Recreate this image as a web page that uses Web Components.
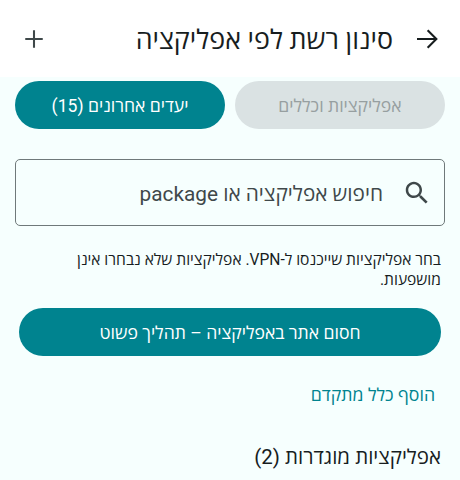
<!DOCTYPE html>
<html lang="he" dir="rtl">
<head>
<meta charset="utf-8">
<style>
  html, body { margin: 0; height: 100%; }
  body { width: 460px; height: 480px; overflow: hidden; background: #f6fffe; font-family: Roboto, "Open Sans", "Liberation Sans", sans-serif; color: #171d1e; }
</style>
</head>
<body>
<app-bar title="סינון רשת לפי אפליקציה"></app-bar>
<filter-page></filter-page>
<script>
class AppBar extends HTMLElement {
    constructor() {
        super();
        this.attachShadow({ mode: "open" });
        this.shadowRoot.innerHTML = `
            <style>
                :host { display: flex; align-items: center; height: 77px; background: #fff; padding: 0 18.5px 0 18.5px; box-sizing: border-box; }
                svg { width: 30px; height: 30px; flex: none; fill: none; stroke-width: 1.65; }
                h1 { flex: 1; margin: 0 18.5px 0 0; font-size: 26.8px; font-weight: 400; color: #171d1e; }
                .add { stroke: #3f484a; }
                .back { stroke: #171d1e; }
            </style>
            <svg class="back" viewBox="0 0 24 24"><path d="M4 12h15.5M12.5 5l7 7-7 7"/></svg>
            <h1>${this.getAttribute("title")}</h1>
            <svg class="add" viewBox="0 0 24 24"><path d="M5 12h14M12 5v14"/></svg>
        `;
    }
}

class PillButton extends HTMLElement {
    constructor() {
        super();
        this.attachShadow({ mode: "open" });
        this.shadowRoot.innerHTML = `
            <style>
                :host { display: flex; align-items: center; justify-content: center; height: 48px; border-radius: 24px; background: #00838f; color: #fff; font-size: 17.6px; }
                :host([disabled]) { background: #dae2e3; color: #979fa0; }
            </style>
            <slot></slot>
        `;
    }
}

class SearchBox extends HTMLElement {
    constructor() {
        super();
        this.attachShadow({ mode: "open" });
        this.shadowRoot.innerHTML = `
            <style>
                :host { display: flex; align-items: center; gap: 19px; height: 67px; box-sizing: border-box; padding: 0 12px 0 0; border: 1px solid #6f797a; border-radius: 5px; color: #3f484a; font-size: 20.8px; }
                svg { width: 30px; height: 30px; fill: #3f484a; flex: none; }
            </style>
            <svg viewBox="0 0 24 24"><path d="M15.5 14h-.79l-.28-.27C15.41 12.59 16 11.11 16 9.5 16 5.91 13.09 3 9.5 3S3 5.91 3 9.5 5.91 16 9.5 16c1.61 0 3.09-.59 4.23-1.57l.27.28v.79l5 4.99L20.49 19l-4.99-5zm-6 0C7.01 14 5 11.99 5 9.5S7.01 5 9.5 5 14 7.01 14 9.5 11.99 14 9.5 14z"/></svg>
            <slot></slot>
        `;
    }
}

class FilterPage extends HTMLElement {
    constructor() {
        super();
        this.attachShadow({ mode: "open" });
        this.shadowRoot.innerHTML = `
            <style>
                :host { display: block; padding: 4px 15px 0; }
                .tabs { display: grid; grid-template-columns: 1fr 1fr; gap: 10px; }
                search-box { margin-top: 30px; }
                p { margin: 24px 4px 0; font-size: 15.6px; line-height: 20px; color: #171d1e; }
                .wide { margin: 18px 4px 0; }
                .link { margin: 27px 10px 0 0; font-size: 17.7px; line-height: 24px; color: #00838f; }
                h2 { margin: 37px 4px 0; font-size: 20.5px; line-height: 26px; font-weight: 400; color: #171d1e; }
            </style>
            <div class="tabs">
                <pill-button disabled>אפליקציות וכללים</pill-button>
                <pill-button>יעדים אחרונים (15)</pill-button>
            </div>
            <search-box>חיפוש אפליקציה או package</search-box>
            <p>בחר אפליקציות שייכנסו ל-VPN. אפליקציות שלא נבחרו אינן מושפעות.</p>
            <pill-button class="wide">חסום אתר באפליקציה – תהליך פשוט</pill-button>
            <div class="link">הוסף כלל מתקדם</div>
            <h2>אפליקציות מוגדרות (2)</h2>
        `;
    }
}

customElements.define("app-bar", AppBar);
customElements.define("pill-button", PillButton);
customElements.define("search-box", SearchBox);
customElements.define("filter-page", FilterPage);
</script>
</body>
</html>
